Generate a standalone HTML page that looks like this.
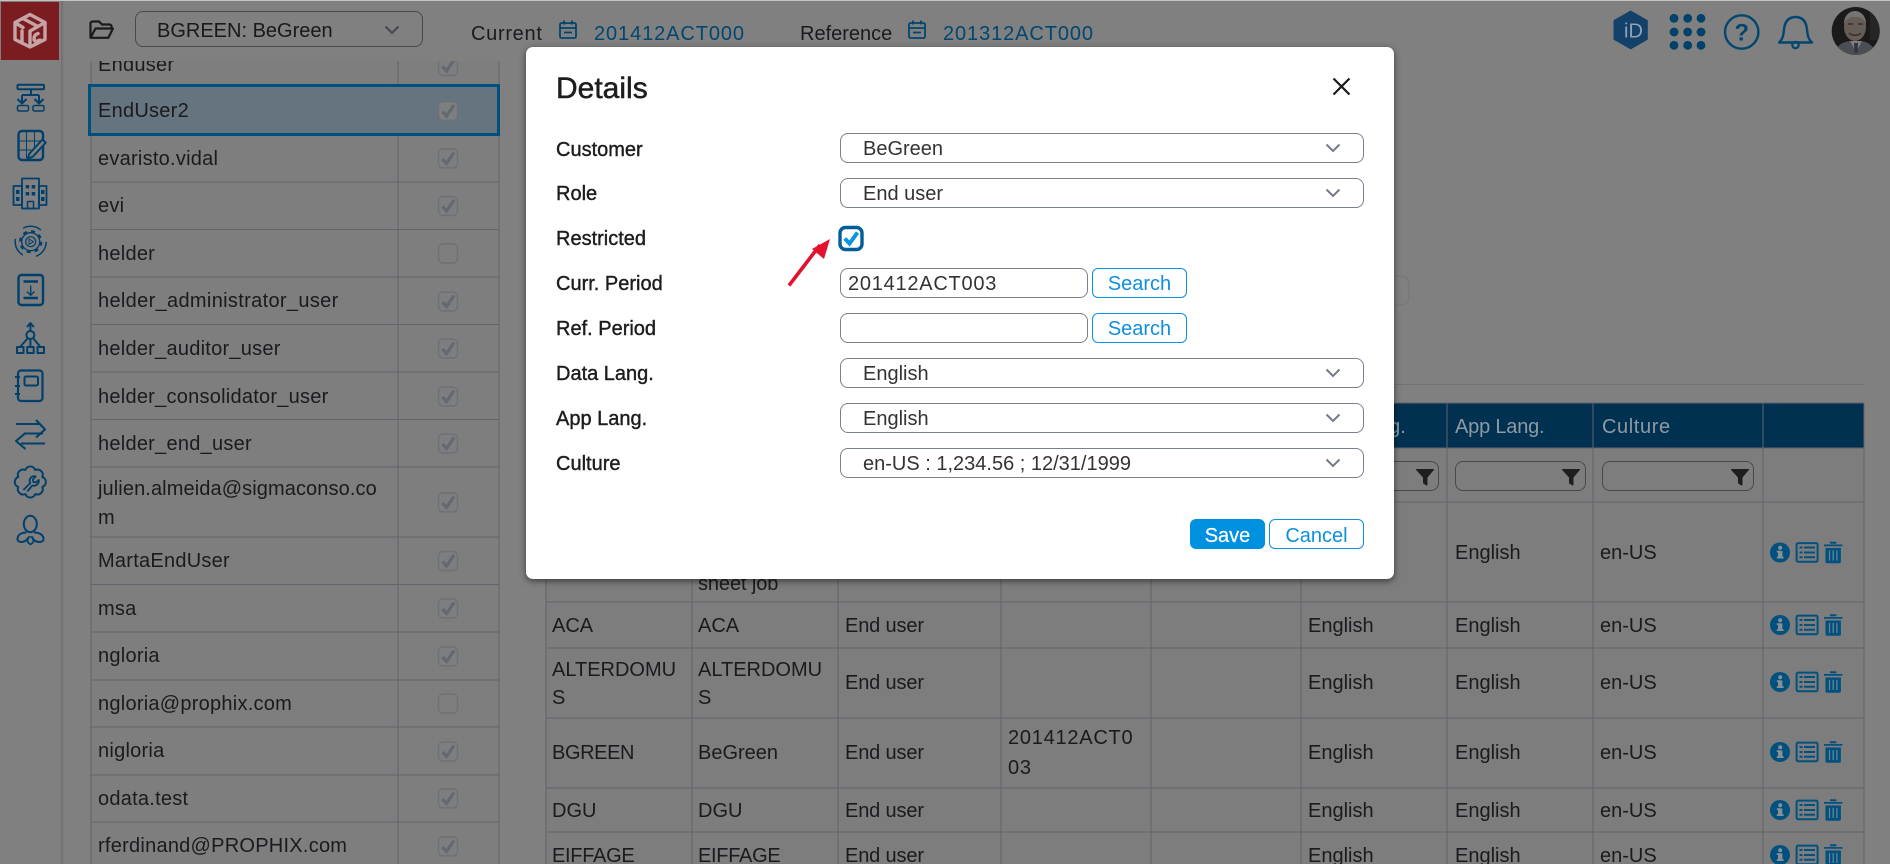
<!DOCTYPE html>
<html lang="en">
<head>
<meta charset="utf-8">
<title>Details</title>
<style>
html,body{margin:0;padding:0;width:1890px;height:864px;overflow:hidden;background:#808080;font-family:"Liberation Sans",sans-serif;font-size:20px;color:#1b1b1f}
#wrap{position:relative;width:1890px;height:864px;overflow:hidden;background:#808080}
.t{position:absolute;line-height:30px;height:30px;white-space:nowrap}
.l{letter-spacing:.25px}
.p{letter-spacing:.75px}
.h{color:#8d9aa4}
.f{position:absolute;border:1.5px solid #47494f;border-radius:8px;box-sizing:border-box}
#side{position:absolute;left:0;top:0;width:61px;height:864px;background:#808080;box-shadow:1px 0 3px rgba(0,0,0,.2);z-index:3}
#top{position:absolute;left:61px;top:0;width:1829px;height:61px;background:#808080;z-index:2}
#tl{position:absolute;left:0;top:0;width:1890px;height:1px;background:#c4c4c4;z-index:4}
#sel{position:absolute;left:88px;top:84px;width:406px;height:46px;border:3px solid #00507f;background:#65747e}
#modal{position:absolute;left:526px;top:47px;width:868px;height:532px;background:#fff;border-radius:7px;box-shadow:0 2px 7px rgba(0,0,0,.55);z-index:5;color:#1d1d1d}
.lab{position:absolute;left:30px;line-height:30px;white-space:nowrap;-webkit-text-stroke:.4px #1d1d1d}
.s{position:absolute;left:314px;width:524px;height:30px;box-sizing:border-box;border:1.5px solid #7a8090;border-radius:8px;color:#333;line-height:31px;padding-left:22px;background:#fff}
.s svg{position:absolute;right:22.5px;top:9px}
.i{position:absolute;left:314px;width:248px;height:30px;box-sizing:border-box;border:1.5px solid #7a8090;border-radius:8px;color:#333;line-height:30px;padding-left:7px;letter-spacing:.75px;background:#fff}
.b{position:absolute;box-sizing:border-box;height:30px;border:1.5px solid #0d90e0;border-radius:6px;color:#0d8fdf;line-height:31px;text-align:center;background:#fff}
.ic{position:absolute;left:0;top:0;z-index:1}
</style>
</head>
<body>
<div id="wrap">

<!-- table grid lines -->
<svg class="ic" width="1890" height="864" style="z-index:0">
  <rect x="546" y="403" width="1318" height="45" fill="#013150"/>
  <rect x="546" y="448" width="1318" height="416" fill="#7d7d7d"/>
  <rect x="91" y="61" width="408" height="803" fill="#7e7e7e"/>
  <g stroke="#62646b" stroke-width="1.4" fill="none" shape-rendering="crispEdges">
    <path d="M91 61V864M398 61V864M499 61V864"/>
    <path d="M91 182H499M91 229.5H499M91 277H499M91 324.5H499M91 372H499M91 419.5H499M91 467H499M91 537H499M91 584.5H499M91 632H499M91 680H499M91 727H499M91 775H499M91 822H499"/>
    <path d="M546 403V864M692 448V864M838 448V864M1001 448V864M1151 448V864M1301 448V864M1447 403V864M1593 403V864M1763 403V864M1864 403V864"/>
    <path d="M546 403H1864M546 448H1864M546 502H1864M546 602H1864M546 648H1864M546 718H1864M546 788H1864M546 832H1864"/>
  </g>
  <path d="M546 384.5H1864" stroke="#707278" stroke-width="1" shape-rendering="crispEdges"/>
  <path d="M1380 276H1401a8 8 0 0 1 8 8V297a8 8 0 0 1-8 8H1380" stroke="#75777b" fill="none" stroke-width="1.2"/>
</svg>

<!-- left table -->
<div id="sel"></div>
<div class="t l" style="left:98px;top:50px">Enduser</div>
<div class="t l" style="left:98px;top:96px">EndUser2</div>
<div class="t l" style="left:98px;top:144px">evaristo.vidal</div>
<div class="t l" style="left:98px;top:191px">evi</div>
<div class="t l" style="left:98px;top:239px">helder</div>
<div class="t l" style="left:98px;top:286px;letter-spacing:.33px">helder_administrator_user</div>
<div class="t l" style="left:98px;top:334px">helder_auditor_user</div>
<div class="t l" style="left:98px;top:382px">helder_consolidator_user</div>
<div class="t l" style="left:98px;top:429px">helder_end_user</div>
<div class="t l" style="left:98px;top:474px;letter-spacing:.1px">julien.almeida@sigmaconso.co</div>
<div class="t l" style="left:98px;top:503px">m</div>
<div class="t l" style="left:98px;top:546px">MartaEndUser</div>
<div class="t l" style="left:98px;top:594px">msa</div>
<div class="t l" style="left:98px;top:641px">ngloria</div>
<div class="t l" style="left:98px;top:689px">ngloria@prophix.com</div>
<div class="t l" style="left:98px;top:736px">nigloria</div>
<div class="t l" style="left:98px;top:784px">odata.test</div>
<div class="t l" style="left:98px;top:831px">rferdinand@PROPHIX.com</div>

<svg class="ic" width="1890" height="864" style="z-index:1">
  <defs>
    <g id="ck"><rect x="-9.5" y="-9.5" width="19" height="19" rx="4.5" fill="#7d7e80" stroke="#6d7077" stroke-width="1.4"/><path d="M-5.5 0.5L-1.5 5L6 -6" fill="none" stroke="#65686f" stroke-width="3.2"/></g>
    <g id="un"><rect x="-9.5" y="-9.5" width="19" height="19" rx="4.5" fill="none" stroke="#6d7077" stroke-width="1.4"/></g>
    <g id="act">
      <circle cx="10" cy="11" r="10" fill="#00517f"/>
      <rect x="8" y="9.5" width="4.4" height="7" fill="#8a8f92"/><rect x="6.8" y="15.2" width="6.8" height="1.8" fill="#8a8f92"/><rect x="6.8" y="9.2" width="4" height="1.8" fill="#8a8f92"/><circle cx="10.2" cy="6.2" r="2" fill="#8a8f92"/>
      <rect x="26.6" y="1.6" width="21" height="18.6" rx="1.5" fill="none" stroke="#00517f" stroke-width="2"/>
      <path d="M29.5 6h3M29.5 11h3M29.5 15.8h3M34 6h11M34 11h11M34 15.8h11" stroke="#00517f" stroke-width="2"/>
      <path d="M54 3h18.4v1.8H54zM60 .3h6.4v2H60z" fill="#00517f"/>
      <path d="M55.5 6.5h15.4v13.6a1.6 1.6 0 0 1-1.6 1.6h-12.2a1.6 1.6 0 0 1-1.6-1.6z" fill="#00517f"/>
      <path d="M59.5 9v10M63.2 9v10M66.9 9v10" stroke="#6b8496" stroke-width="1.2"/>
    </g>
    <path id="fl" d="M-8.5 -8H8.5Q9.5 -8 8.8 -7L2.5 0.5V7.5Q2.5 9 1 8.2L-2 6.2V0.5L-8.8 -7Q-9.5 -8 -8.5 -8Z" fill="#1e1e20"/>
  </defs>
  <use href="#ck" x="448" y="66"/>
  <use href="#ck" x="448" y="111"/>
  <use href="#ck" x="448" y="158.5"/>
  <use href="#ck" x="448" y="206"/>
  <use href="#un" x="448" y="253.5"/>
  <use href="#ck" x="448" y="301.5"/>
  <use href="#ck" x="448" y="348.5"/>
  <use href="#ck" x="448" y="396.5"/>
  <use href="#ck" x="448" y="443.5"/>
  <use href="#ck" x="448" y="502.5"/>
  <use href="#ck" x="448" y="561"/>
  <use href="#ck" x="448" y="608.5"/>
  <use href="#ck" x="448" y="656.5"/>
  <use href="#un" x="448" y="703.5"/>
  <use href="#ck" x="448" y="751.5"/>
  <use href="#ck" x="448" y="798.5"/>
  <use href="#ck" x="448" y="846.5"/>

  <use href="#act" x="1770" y="541.5"/>
  <use href="#act" x="1770" y="614"/>
  <use href="#act" x="1770" y="671"/>
  <use href="#act" x="1770" y="741"/>
  <use href="#act" x="1770" y="799"/>
  <use href="#act" x="1770" y="844"/>

  <use href="#fl" x="1425" y="477"/>
  <use href="#fl" x="1571" y="477"/>
  <use href="#fl" x="1740" y="477"/>
</svg>

<!-- right table text -->
<div class="t h" style="left:1308px;top:412px">Data Lang.</div>
<div class="t h" style="left:1455px;top:412px;letter-spacing:-.2px">App Lang.</div>
<div class="t h" style="left:1602px;top:412px;letter-spacing:.6px">Culture</div>
<div class="f" style="left:1300px;top:461px;width:139px;height:30px"></div>
<div class="f" style="left:1455px;top:461px;width:131px;height:30px"></div>
<div class="f" style="left:1602px;top:461px;width:152px;height:30px"></div>

<div class="t" style="left:1455px;top:538px">English</div><div class="t" style="left:1600px;top:538px">en-US</div>
<div class="t" style="left:698px;top:569px;letter-spacing:-.1px">sheet job</div>

<div class="t" style="left:552px;top:611px">ACA</div><div class="t" style="left:698px;top:611px">ACA</div><div class="t" style="left:845px;top:611px;letter-spacing:-.15px">End user</div><div class="t" style="left:1308px;top:611px">English</div><div class="t" style="left:1455px;top:611px">English</div><div class="t" style="left:1600px;top:611px">en-US</div>

<div class="t" style="left:552px;top:655px">ALTERDOMU</div><div class="t" style="left:552px;top:683px">S</div><div class="t" style="left:698px;top:655px">ALTERDOMU</div><div class="t" style="left:698px;top:683px">S</div><div class="t" style="left:845px;top:668px;letter-spacing:-.15px">End user</div><div class="t" style="left:1308px;top:668px">English</div><div class="t" style="left:1455px;top:668px">English</div><div class="t" style="left:1600px;top:668px">en-US</div>

<div class="t" style="left:552px;top:738px;letter-spacing:-.4px">BGREEN</div><div class="t" style="left:698px;top:738px">BeGreen</div><div class="t" style="left:845px;top:738px;letter-spacing:-.15px">End user</div><div class="t p" style="left:1008px;top:723px">201412ACT0</div><div class="t p" style="left:1008px;top:753px">03</div><div class="t" style="left:1308px;top:738px">English</div><div class="t" style="left:1455px;top:738px">English</div><div class="t" style="left:1600px;top:738px">en-US</div>

<div class="t" style="left:552px;top:796px">DGU</div><div class="t" style="left:698px;top:796px">DGU</div><div class="t" style="left:845px;top:796px;letter-spacing:-.15px">End user</div><div class="t" style="left:1308px;top:796px">English</div><div class="t" style="left:1455px;top:796px">English</div><div class="t" style="left:1600px;top:796px">en-US</div>

<div class="t" style="left:552px;top:841px;letter-spacing:-.3px">EIFFAGE</div><div class="t" style="left:698px;top:841px;letter-spacing:-.3px">EIFFAGE</div><div class="t" style="left:845px;top:841px;letter-spacing:-.15px">End user</div><div class="t" style="left:1308px;top:841px">English</div><div class="t" style="left:1455px;top:841px">English</div><div class="t" style="left:1600px;top:841px">en-US</div>

<!-- top bar -->
<div id="top"></div>
<div id="tl"></div>
<div style="position:absolute;left:135px;top:11px;width:288px;height:36px;box-sizing:border-box;border:1.5px solid #47494f;border-radius:8px;z-index:3"></div>
<div class="t" style="left:157px;top:16px;z-index:3;color:#19191c">BGREEN: BeGreen</div>
<div class="t" style="left:471px;top:19px;z-index:3;letter-spacing:.7px">Current</div>
<div class="t p" style="left:594px;top:19px;z-index:3;color:#00466e;letter-spacing:.9px">201412ACT000</div>
<div class="t" style="left:800px;top:19px;z-index:3">Reference</div>
<div class="t p" style="left:943px;top:19px;z-index:3;color:#00466e;letter-spacing:.9px">201312ACT000</div>

<svg class="ic" width="1890" height="70" style="z-index:3">
  <!-- folder -->
  <path d="M90.500 37V23.500a2 2 0 0 1 2-2h6.500l3 3h7.500a2 2 0 0 1 2 2v3" fill="none" stroke="#1a1a1c" stroke-width="2.200"/>
  <path d="M90.500 37.800h17.800l4.700-9.300H95.500z" fill="none" stroke="#1a1a1c" stroke-width="2.200" stroke-linejoin="round"/>
  <!-- chevron -->
  <path d="M385.500 26.500l6.500 6.500 6.500-6.500" fill="none" stroke="#47494f" stroke-width="2"/>
  <!-- calendars -->
  <g fill="none" stroke="#00466e" stroke-width="1.800">
    <rect x="560" y="23" width="16" height="15" rx="1.500"/><path d="M560 28h16M564 20.500v4M572 20.500v4M564 32.500h8"/>
    <rect x="909" y="23" width="16" height="15" rx="1.500"/><path d="M909 28h16M913 20.500v4M921 20.500v4M913 32.500h8"/>
  </g>
  <!-- hex iD -->
  <path d="M1630.700 11L1647.300 20.500V39.300L1630.700 48.800L1614 39.300V20.500Z" fill="#134169" stroke="#134169" stroke-width="1" stroke-linejoin="round"/>
  <text x="1624" y="37.500" font-family="Liberation Sans, sans-serif" font-size="20" fill="#8fa3b5">iD</text>
  <!-- dots -->
  <g fill="#00416b">
    <circle cx="1674" cy="18.300" r="4.400"/><circle cx="1687.700" cy="18.300" r="4.400"/><circle cx="1701" cy="18.300" r="4.400"/>
    <circle cx="1674" cy="32" r="4.400"/><circle cx="1687.700" cy="32" r="4.400"/><circle cx="1701" cy="32" r="4.400"/>
    <circle cx="1674" cy="45.300" r="4.400"/><circle cx="1687.700" cy="45.300" r="4.400"/><circle cx="1701" cy="45.300" r="4.400"/>
  </g>
  <!-- help -->
  <circle cx="1741.700" cy="32" r="16.700" fill="none" stroke="#00466f" stroke-width="2.400"/>
  <text x="1741.700" y="40.500" text-anchor="middle" font-family="Liberation Sans, sans-serif" font-size="24" font-weight="700" fill="#00466f">?</text>
  <!-- bell -->
  <path d="M1779 42.500c4-3.500 4.500-8 5-13 .7-7 3.500-12.500 11.500-12.500s10.800 5.500 11.500 12.500c.5 5 1 9.500 5 13z" fill="none" stroke="#00466f" stroke-width="2.400" stroke-linejoin="round"/>
  <circle cx="1795.500" cy="45" r="3.200" fill="none" stroke="#00466f" stroke-width="2.200"/>
  <!-- avatar -->
  <clipPath id="av"><circle cx="1855.700" cy="31" r="24"/></clipPath>
  <g clip-path="url(#av)">
    <rect x="1830" y="5" width="52" height="52" fill="#1a1a1b"/>
    <rect x="1870" y="5" width="12" height="35" fill="#262524"/>
    <path d="M1834 56c1-10 8-14 16-15h11c8 1 14 6 16 15z" fill="#4b4e52"/>
    <path d="M1850 41l6 11 6-11z" fill="#7f7e86"/>
    <path d="M1854 43h4l-.5 10h-3z" fill="#33333b"/>
    <ellipse cx="1855" cy="27" rx="11" ry="14" fill="#665d57"/>
    <path d="M1844 24c0-9 6-13 11-13s11 4 11 13c-3-6-5-7-11-7s-8 1-11 7z" fill="#747472"/>
    <path d="M1849 33c3 3 9 3 12 0" stroke="#39302d" stroke-width="1.500" fill="none"/>
    <path d="M1848 24h5M1858 24h5" stroke="#34302e" stroke-width="1.500"/>
  </g>
</svg>

<!-- sidebar -->
<div id="side">
<svg width="61" height="864" style="position:absolute;left:0;top:0">
  <rect x="1" y="2" width="58" height="58" fill="#7b1c20"/>
  <g fill="none" stroke="#c6a4a5" stroke-width="3.400" stroke-linejoin="round" stroke-linecap="round">
    <path d="M30 14.500L45 22.500V39.500L30 47L15 39.500V22.500Z"/>
    <path d="M15.500 23L23 27.500M45 22.500L30 31V46"/>
    <path d="M23 18.500l14 7.500"/>
    <path d="M22 31v11M38 33.500c-3 1-4 3-4 5.500s2 3 6 1"/>
  </g>
  <g fill="none" stroke="#00406b" stroke-width="2" stroke-linejoin="round">
    <!-- 1 hierarchy -->
    <rect x="17.500" y="84.800" width="26.500" height="4.500" rx="1"/>
    <path d="M31 89.500V95M22 95H39M22 95V103.500M39 95V103.500M17.500 99l4.500 4.500 4.500-4.500M34.500 99l4.500 4.500 4.500-4.500"/>
    <rect x="17.500" y="105.500" width="11" height="5.500" rx="1.500" stroke-width="1.500"/>
    <rect x="33" y="105.500" width="11" height="5.500" rx="1.500" stroke-width="1.500"/>
    <!-- 2 table edit -->
    <rect x="18.500" y="131" width="24.500" height="29" rx="3.500" stroke-width="2.400"/>
    <path d="M26.500 131V158M34.500 131V148M18.500 141H43M18.500 150H31" stroke-width="1"/>
    <path d="M42.500 139.500l3.200 3.200L33 156.500l-5.500 2.500 2-5.500z" fill="#808080" stroke-width="2"/>
    <path d="M27 160l.5-3.500 3 3z" fill="#00406b" stroke="none"/>
    <!-- 3 building -->
    <rect x="22" y="178.500" width="17" height="30" stroke-width="1.800"/>
    <rect x="13.500" y="186" width="8.500" height="19" stroke-width="1.800"/>
    <rect x="39" y="186" width="7.500" height="19" stroke-width="1.800"/>
    <rect x="27.500" y="201.500" width="6" height="7" stroke-width="1.500"/>
    <!-- 4 gear -->
    <circle cx="30.700" cy="241.700" r="9" stroke-width="1.300"/>
    <circle cx="30.700" cy="241.700" r="10.500" stroke-width="2.200" stroke-dasharray="4 4.250"/>
    <circle cx="30.700" cy="241.700" r="5" stroke-width="1.200"/>
    <path d="M29 239l4.500 2.700-4.500 2.700z" stroke-width="1"/>
    <circle cx="30.700" cy="241.700" r="15.500" stroke-width="1.500" stroke-dasharray="19 13.500"/>
    <!-- 5 doc -->
    <rect x="18.500" y="275" width="24.500" height="30" rx="3" stroke-width="2.400"/>
    <path d="M23.500 281.500H38M23.500 298H38" stroke-width="2.400"/>
    <path d="M30.700 285.500V295M27 291.500l3.700 3.700 3.700-3.700" stroke-width="1.400"/>
    <!-- 6 tree -->
    <path d="M30.400 331V323.500M27 327l3.400-4 3.400 4"/>
    <circle cx="30.400" cy="335" r="4"/>
    <path d="M28 338L20 347M30.400 339V347M33 338L40.500 347"/>
    <rect x="17" y="347" width="6.500" height="6"/>
    <rect x="27.200" y="347" width="6.500" height="6"/>
    <rect x="37.500" y="347" width="6.500" height="6"/>
    <!-- 7 notebook -->
    <rect x="18" y="370.500" width="24.500" height="30.500" rx="3" stroke-width="2.200"/>
    <rect x="24.500" y="376.500" width="13.500" height="9" rx="1.500"/>
    <path d="M15 377h5M15 386h5M15 394h5"/>
    <!-- 8 arrows -->
    <path d="M16 424h24M36 420l9 9.500-9 8" stroke-width="2.100"/>
    <path d="M24 433.500H43" stroke-width="2"/>
    <path d="M45 443.500H21M25.500 433l-9.500 8 9.500 8" stroke-width="2.100"/>
    <!-- 9 gear wrench -->
    <g transform="translate(30.300 482)">
      <path d="M12 5A5.300 5.300 0 0 1 5 12A5.300 5.300 0 0 1 -5 12A5.300 5.300 0 0 1 -12 5A5.300 5.300 0 0 1 -12 -5A5.300 5.300 0 0 1 -5 -12A5.300 5.300 0 0 1 5 -12A5.300 5.300 0 0 1 12 -5A5.300 5.300 0 0 1 12 5Z"/>
      <path d="M-7 8L0 1a4.500 4.500 0 0 1 5.500-6.500l-3 3 .5 2.500 2.500.5 3-2.500a5 5 0 0 1-6.500 5.500L-3 9.500" stroke-width="1.800"/>
    </g>
    <!-- 10 person -->
    <ellipse cx="30.300" cy="524" rx="6.500" ry="8.200"/>
    <path d="M26.500 532.500C21 532.500 17.500 535 17.500 539C17.500 543 25 543.500 28.500 537.500"/>
    <path d="M34 532.500C39.500 532.500 43.500 535 43.500 539C43.500 543 35.500 543.500 32 537.500"/>
    <path d="M28.500 537h4l1 5-3 2.500-3-2.500z" stroke-width="1.500"/>
  </g>
  <g fill="#00406b">
    <rect x="25.700" y="185" width="3.500" height="3.500"/><rect x="31.700" y="185" width="3.500" height="3.500"/>
    <rect x="25.700" y="192" width="3.500" height="3.500"/><rect x="31.700" y="192" width="3.500" height="3.500"/>
    <rect x="16" y="190" width="3.500" height="4"/><rect x="16" y="197" width="3.500" height="4"/>
    <rect x="41" y="190" width="3.500" height="4"/><rect x="41" y="197" width="3.500" height="4"/>
  </g>
</svg>
</div>

<!-- modal -->
<div id="modal">
  <div style="position:absolute;left:30px;top:22px;font-size:30px;line-height:40px;-webkit-text-stroke:.5px #1d1d1d">Details</div>
  <svg style="position:absolute;left:805.500px;top:29.500px" width="19" height="19"><path d="M1.500 1.500L17.500 17.500M17.500 1.500L1.500 17.500" stroke="#1a1a1a" stroke-width="2.200" fill="none"/></svg>

  <div class="lab" style="top:88px">Customer</div>
  <div class="lab" style="top:132px">Role</div>
  <div class="lab" style="top:177px">Restricted</div>
  <div class="lab" style="top:222px">Curr. Period</div>
  <div class="lab" style="top:267px">Ref. Period</div>
  <div class="lab" style="top:312px">Data Lang.</div>
  <div class="lab" style="top:357px">App Lang.</div>
  <div class="lab" style="top:402px">Culture</div>

  <div class="s" style="top:86px">BeGreen<svg width="16" height="10"><path d="M1.500 1.500L8 8L14.500 1.500" fill="none" stroke="#747a88" stroke-width="2"/></svg></div>
  <div class="s" style="top:131px">End user<svg width="16" height="10"><path d="M1.500 1.500L8 8L14.500 1.500" fill="none" stroke="#747a88" stroke-width="2"/></svg></div>

  <svg style="position:absolute;left:258px;top:175px" width="82" height="70">
    <path d="M5 63.500L36 23" stroke="#e3102e" stroke-width="3.600" fill="none"/>
    <path d="M46 17L28 27L40 37Z" fill="#e3102e"/>
    <rect x="56" y="5.500" width="22" height="22" rx="5.500" fill="#fff" stroke="#005f99" stroke-width="3.400"/>
    <path d="M60.800 16.500L65.500 21.500L73.500 10.500" fill="none" stroke="#0a95e2" stroke-width="4"/>
  </svg>

  <div class="i" style="top:221px">201412ACT003</div>
  <div class="b" style="left:566px;top:221px;width:95px">Search</div>
  <div class="i" style="top:266px"></div>
  <div class="b" style="left:566px;top:266px;width:95px">Search</div>

  <div class="s" style="top:311px">English<svg width="16" height="10"><path d="M1.500 1.500L8 8L14.500 1.500" fill="none" stroke="#747a88" stroke-width="2"/></svg></div>
  <div class="s" style="top:356px">English<svg width="16" height="10"><path d="M1.500 1.500L8 8L14.500 1.500" fill="none" stroke="#747a88" stroke-width="2"/></svg></div>
  <div class="s" style="top:401px">en-US : 1,234.56 ; 12/31/1999<svg width="16" height="10"><path d="M1.500 1.500L8 8L14.500 1.500" fill="none" stroke="#747a88" stroke-width="2"/></svg></div>

  <div class="b" style="left:664px;top:472px;width:75px;background:#0090e0;color:#fff;border-color:#0090e0;-webkit-text-stroke:.2px #fff;line-height:32px">Save</div>
  <div class="b" style="left:743px;top:472px;width:95px;line-height:32px">Cancel</div>
</div>

</div>
</body>
</html>
